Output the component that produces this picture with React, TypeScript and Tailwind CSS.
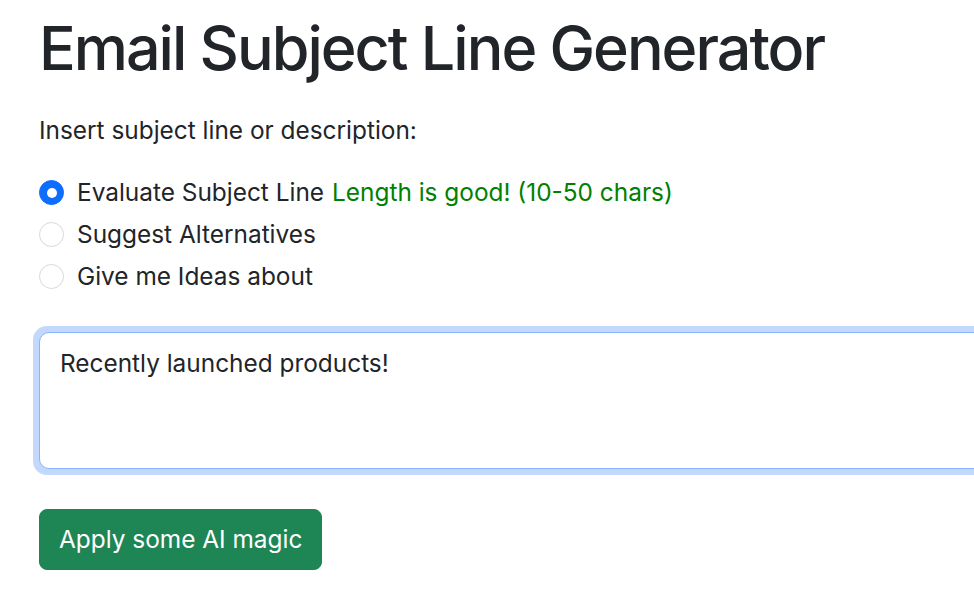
import { useState } from "react";

const OPTIONS = ["Evaluate Subject Line", "Suggest Alternatives", "Give me Ideas about"];

export default function App() {
  const [mode, setMode] = useState(0);
  const [text, setText] = useState("Recently launched products!");

  return (
    <div className="h-[600px] w-full overflow-hidden bg-white font-['Inter','Liberation_Sans',sans-serif] text-[#212529]">
      <div className="pl-[39px] pt-[12px]">
        <h1 className="text-[61px] font-medium leading-[1.2] tracking-[-2px]">Email Subject Line Generator</h1>

        <p className="mt-[27px] text-[24.4px] leading-[1.5]">Insert subject line or description:</p>

        {/* Mode */}
        <div className="mt-[23px] flex flex-col">
          {OPTIONS.map((o, i) => (
            <label key={o} className="flex h-[42px] cursor-pointer items-center text-[24.4px]">
              <span
                onClick={() => setMode(i)}
                className={`mr-[13px] flex h-[25px] w-[25px] items-center justify-center rounded-full border ${
                  mode === i ? "border-[#0d6efd] bg-[#0d6efd]" : "border-[#d5d9dd] bg-white"
                }`}
              >
                {mode === i && <span className="h-[10px] w-[10px] rounded-full bg-white" />}
              </span>
              <span>{o}</span>
              {i === 0 && <span className="ml-[8px] text-[#008000]">Length is good! (10-50 chars)</span>}
            </label>
          ))}
        </div>

        {/* Input */}
        <div className="mt-[28px] -ml-[6px] w-[1000px] rounded-[14px] bg-[#c2d8fc] p-[6px]">
          <textarea
            value={text}
            onChange={(e) => setText(e.target.value)}
            className="block h-[137px] w-full resize-none rounded-[10px] border border-[#86b7fe] bg-white px-[20px] py-[12px] text-[24.4px] leading-[1.5] outline-none"
          />
        </div>

        <button className="mt-[34px] h-[61px] rounded-[8px] border border-[#198754] bg-[#1e8655] px-[19px] text-[24.4px] text-white">
          Apply some AI magic
        </button>
      </div>
    </div>
  );
}
